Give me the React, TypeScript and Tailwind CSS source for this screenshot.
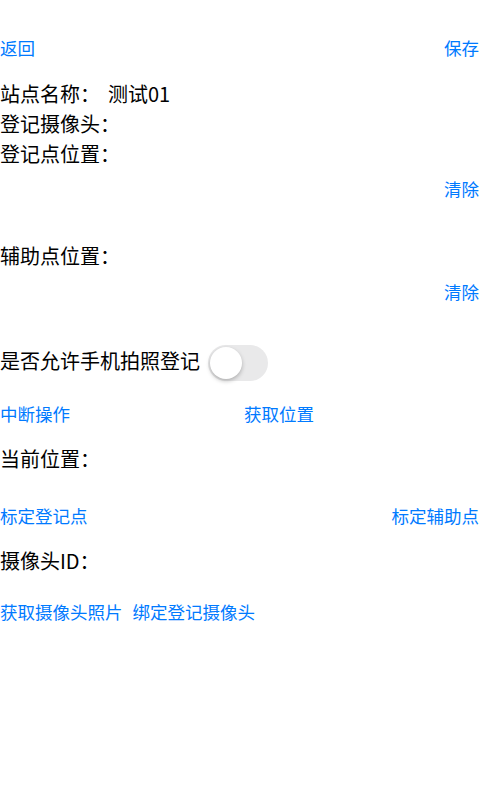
import React from "react";

const font = { fontFamily: '"Noto Sans CJK SC", "Noto Sans", sans-serif' };

function Link({ children, className = "" }: { children: React.ReactNode; className?: string }) {
  return (
    <button className={`text-[17.5px] leading-6 text-[#007aff] ${className}`}>{children}</button>
  );
}

function Label({ children, className = "" }: { children: React.ReactNode; className?: string }) {
  return <div className={`h-[30px] text-[20px] leading-[30px] text-black ${className}`}>{children}</div>;
}

export default function App() {
  const [allow, setAllow] = React.useState(false);

  return (
    <div className="min-h-screen bg-white pt-9" style={font}>
      {/* top bar */}
      <div className="flex h-6 items-center justify-between pr-px">
        <Link>返回</Link>
        <Link>保存</Link>
      </div>

      <Label className="mt-[19px] flex">
        <span>站点名称：</span>
        <span className="ml-2">测试01</span>
      </Label>
      <Label>登记摄像头：</Label>
      <Label>登记点位置：</Label>
      <div className="mt-2 flex h-6 justify-end pr-px">
        <Link>清除</Link>
      </div>

      <Label className="mt-10">辅助点位置：</Label>
      <div className="mt-[9px] flex h-6 justify-end pr-px">
        <Link>清除</Link>
      </div>

      <div className="mt-10 flex h-[38px] items-center">
        <span className="-mt-1 text-[20px] text-black">是否允许手机拍照登记</span>
        <button
          onClick={() => setAllow(!allow)}
          className={`ml-2 flex h-[36px] w-[60px] items-center rounded-full p-[2px] ${
            allow ? "justify-end bg-[#4cd964]" : "justify-start bg-[#e9e9ea]"
          }`}
        >
          <span className="h-[32px] w-[32px] rounded-full bg-white shadow-[0_2px_4px_rgba(0,0,0,0.25)]" />
        </button>
      </div>

      <div className="mt-5 flex h-6 items-center">
        <div className="w-[244px]">
          <Link>中断操作</Link>
        </div>
        <Link>获取位置</Link>
      </div>

      <Label className="mt-[18px]">当前位置：</Label>

      <div className="mt-[30px] flex h-6 items-center justify-between pr-px">
        <Link>标定登记点</Link>
        <Link>标定辅助点</Link>
      </div>

      <Label className="mt-[18px]">摄像头ID：</Label>

      <div className="mt-6 flex h-6 items-center gap-[10px]">
        <Link>获取摄像头照片</Link>
        <Link>绑定登记摄像头</Link>
      </div>
    </div>
  );
}
